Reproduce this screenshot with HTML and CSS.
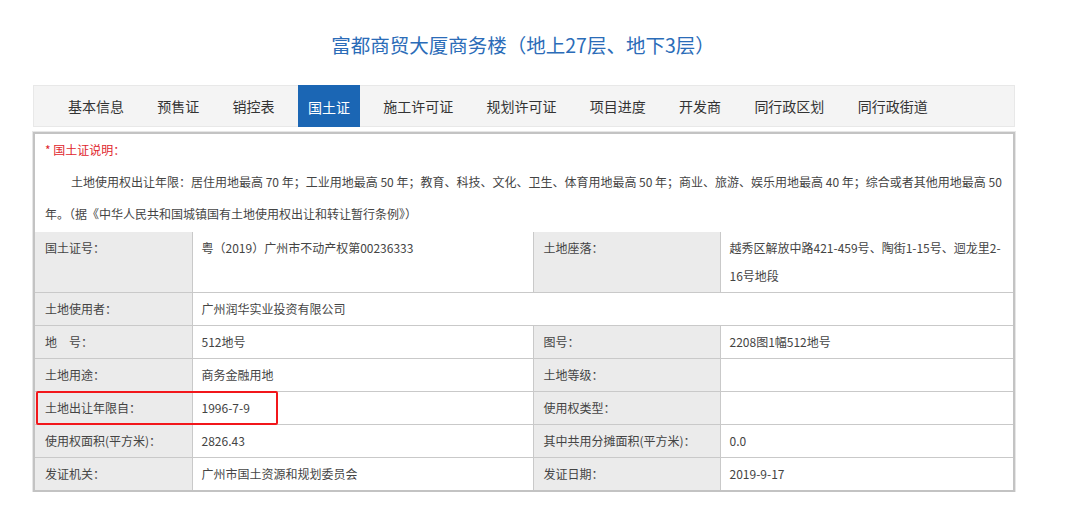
FILE: index.html
```html
<!DOCTYPE html>
<html lang="zh-CN">
<head>
<meta charset="utf-8">
<title>富都商贸大厦商务楼</title>
<link rel="stylesheet" href="styles.css">
</head>
<body>
<div class="page">
  <h1 class="title">富都商贸大厦商务楼（地上27层、地下3层）</h1>
  <nav class="tabs">
    <a class="tab">基本信息</a>
    <a class="tab">预售证</a>
    <a class="tab">销控表</a>
    <a class="tab active">国土证</a>
    <a class="tab">施工许可证</a>
    <a class="tab">规划许可证</a>
    <a class="tab">项目进度</a>
    <a class="tab">开发商</a>
    <a class="tab">同行政区划</a>
    <a class="tab">同行政街道</a>
  </nav>
  <section class="panel">
    <div class="note">
      <div class="note-title">* 国土证说明：</div>
      <p class="note-text">土地使用权出让年限：居住用地最高 70 年；工业用地最高 50 年；教育、科技、文化、卫生、体育用地最高 50 年；商业、旅游、娱乐用地最高 40 年；综合或者其他用地最高 50 年。（据《中华人民共和国城镇国有土地使用权出让和转让暂行条例》）</p>
    </div>
    <table class="info">
      <colgroup>
        <col class="c1"><col class="c2"><col class="c3"><col class="c4">
      </colgroup>
      <tr class="tall">
        <td class="label">国土证号：</td>
        <td>粤（2019）广州市不动产权第00236333</td>
        <td class="label">土地座落：</td>
        <td>越秀区解放中路421-459号、陶街1-15号、迴龙里2-<br>16号地段</td>
      </tr>
      <tr>
        <td class="label">土地使用者：</td>
        <td colspan="3">广州润华实业投资有限公司</td>
      </tr>
      <tr>
        <td class="label">地&emsp;号：</td>
        <td>512地号</td>
        <td class="label">图号：</td>
        <td>2208图1幅512地号</td>
      </tr>
      <tr>
        <td class="label">土地用途：</td>
        <td>商务金融用地</td>
        <td class="label">土地等级：</td>
        <td></td>
      </tr>
      <tr>
        <td class="label hl-cell">土地出让年限自：<span class="highlight"></span></td>
        <td>1996-7-9</td>
        <td class="label">使用权类型：</td>
        <td></td>
      </tr>
      <tr>
        <td class="label">使用权面积(平方米)：</td>
        <td>2826.43</td>
        <td class="label">其中共用分摊面积(平方米)：</td>
        <td>0.0</td>
      </tr>
      <tr>
        <td class="label">发证机关：</td>
        <td>广州市国土资源和规划委员会</td>
        <td class="label">发证日期：</td>
        <td>2019-9-17</td>
      </tr>
    </table>
  </section>
</div>
</body>
</html>
```

FILE: styles.css
```css
* { box-sizing: border-box; }
html, body {
  margin: 0;
  padding: 0;
  background: #ffffff;
  font-family: "Noto Sans CJK SC", "Noto Sans", sans-serif;
  color: #444;
}
.page {
  width: 982px;
  margin-left: 33px;
  padding-top: 30px;
}
.title {
  margin: 0;
  padding-right: 2px;
  text-align: center;
  font-size: 19.5px;
  font-weight: normal;
  line-height: 30px;
  color: #2b6cb8;
}
.tabs {
  margin-top: 25px;
  height: 42px;
  background: #f4f4f4;
  border: 1px solid #e8e8e8;
  display: flex;
  align-items: flex-start;
  gap: 13.3px;
  padding-left: 24px;
}
.tab {
  display: block;
  padding: 0 10px;
  height: 40px;
  line-height: 40px;
  font-size: 14px;
  color: #333;
  white-space: nowrap;
}
.tab.active {
  background: #1b66b4;
  color: #fff;
  height: 42px;
  margin-top: -1px;
  line-height: 42px;
  padding-top: 1px;
}
.panel {
  margin-top: 5px;
  border: 2px solid #c3c3c3;
  box-shadow: 0 0 0 1px #e6e6e6;
}
.note {
  padding: 0 10px 2px;
  font-size: 12px;
  line-height: 32px;
}
.note-title {
  color: #e0262d;
}
.note-text {
  margin: 0;
  text-indent: 26px;
  color: #444;
}
.info {
  width: 100%;
  border-collapse: collapse;
  table-layout: fixed;
  border-style: hidden;
  font-size: 12px;
}
.c1 { width: 157px; }
.c2 { width: 341px; }
.c3 { width: 187px; }
.c4 { width: auto; }
.info td {
  border: 1px solid #c9c9c9;
  padding: 2px 9px;
  line-height: 28px;
  vertical-align: top;
  color: #444;
  background: #fff;
}
.info td.label {
  background: #ebebeb;
  padding-left: 10px;
  white-space: nowrap;
}
.hl-cell {
  position: relative;
}
.highlight {
  position: absolute;
  left: 1px;
  top: -1px;
  width: 242px;
  height: 34px;
  border: 2.5px solid #f2171b;
  border-radius: 2px;
  pointer-events: none;
}
```
